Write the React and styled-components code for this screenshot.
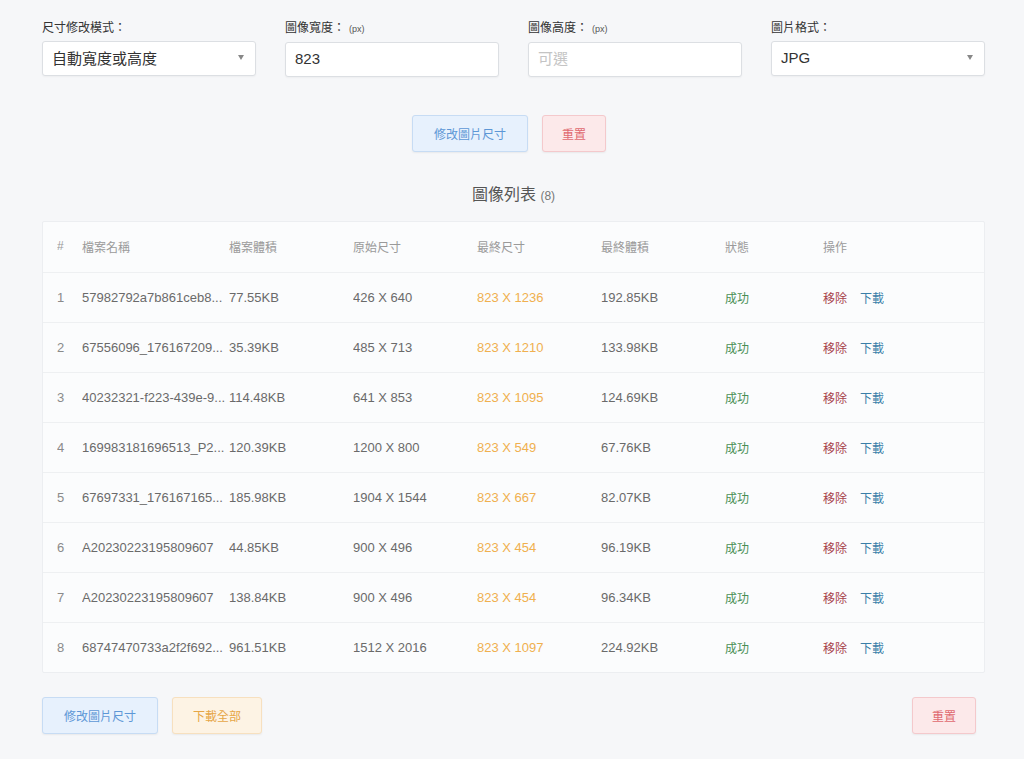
import React from 'react'
import styled, { createGlobalStyle, css } from 'styled-components'

const GlobalStyle = createGlobalStyle`
  html, body {
    margin: 0;
    padding: 0;
    background: #f6f7f9;
  }
  body {
    font-family: "Liberation Sans", "Noto Sans CJK TC", sans-serif;
    color: #555;
  }
`

const Page = styled.div`
  width: 943px;
  margin-left: 42px;
  padding-top: 20px;
  padding-bottom: 26px;
`

const Controls = styled.div`
  display: grid;
  grid-template-columns: repeat(4, 214px);
  column-gap: 29px;
`

const Field = styled.div`
  display: flex;
  flex-direction: column;
`

const Label = styled.label`
  font-size: 12px;
  line-height: 16px;
  color: #333;
  margin-bottom: 5px;

  small {
    font-size: 9px;
    color: #555;
    margin-left: 4px;
  }
`

const boxStyle = css`
  box-sizing: border-box;
  height: 35px;
  background: #fff;
  border: 1px solid #dcdfe3;
  border-radius: 3px;
  padding: 0 9px;
  font-family: inherit;
  font-size: 15px;
  color: #333;
  box-shadow: 0 1px 2px rgba(0, 0, 0, 0.04);
`

const Input = styled.input`
  ${boxStyle}
  width: 100%;
  outline: none;
  padding-bottom: 3px;

  &::placeholder {
    color: #c4c4c4;
  }
`

const Select = styled.div`
  ${boxStyle}
  display: flex;
  align-items: center;
  justify-content: space-between;
  padding-bottom: 3px;

  &::after {
    content: "";
    border-left: 3.5px solid transparent;
    border-right: 3.5px solid transparent;
    border-top: 5px solid #888;
    margin-right: 2px;
  }
`

const ButtonRow = styled.div`
  display: flex;
  justify-content: ${p => p.$spread ? 'flex-start' : 'center'};
  gap: 14px;
  margin-top: ${p => p.$top}px;
  padding-right: ${p => p.$spread ? 0 : 9}px;
`

const palette = {
  blue: { bg: '#e7f1fd', border: '#c7dcf4', color: '#5d97d6' },
  red: { bg: '#fce9ea', border: '#f4c9cc', color: '#e06a70' },
  orange: { bg: '#fdf3e4', border: '#f7e0bf', color: '#e6a647' }
}

const Button = styled.button`
  box-sizing: border-box;
  height: 37px;
  width: ${p => p.$w}px;
  padding: 0;
  border-radius: 3px;
  font-family: inherit;
  font-size: 12px;
  cursor: pointer;
  background: ${p => palette[p.$kind].bg};
  border: 1px solid ${p => palette[p.$kind].border};
  color: ${p => palette[p.$kind].color};
  box-shadow: 0 1px 2px rgba(0, 0, 0, 0.06);
  margin-left: ${p => p.$push ? 'auto' : '0'};
  margin-right: ${p => p.$push ? '9px' : '0'};
`

const Title = styled.h3`
  margin: 33px 0 0;
  text-align: center;
  font-weight: normal;
  font-size: 16px;
  line-height: 20px;
  color: #555;

  span {
    font-size: 12px;
    color: #777;
  }
`

const Table = styled.div`
  margin-top: 15px;
  background: #fbfcfd;
  border: 1px solid #eceef1;
  border-radius: 2px;
`

const Row = styled.div`
  display: grid;
  grid-template-columns: 25px 147px 124px 124px 124px 124px 98px 1fr;
  align-items: center;
  height: 50px;
  padding-left: 14px;
  padding-bottom: ${p => p.$head ? 2 : 0}px;
  font-size: ${p => p.$head ? 12 : 13}px;
  color: ${p => p.$head ? '#9a9a9a' : '#6a6a6a'};
  border-top: ${p => p.$head ? 'none' : '1px solid #eef0f2'};
  box-sizing: border-box;
`

const Cell = styled.span`
  white-space: nowrap;
  overflow: hidden;
  color: ${p => p.$color || 'inherit'};
`

const Index = styled(Cell)`
  color: #8a8a8a;
`

const Status = styled(Cell)`
  font-size: 12px;
  color: #4a8f55;
`

const Actions = styled.span`
  display: flex;
  gap: 13px;
  font-size: 12px;
`

const Action = styled.a`
  color: ${p => p.$color};
  text-decoration: none;
  cursor: pointer;
`

const rows = [
  ['57982792a7b861ceb8...', '77.55KB', '426 X 640', '823 X 1236', '192.85KB'],
  ['67556096_176167209...', '35.39KB', '485 X 713', '823 X 1210', '133.98KB'],
  ['40232321-f223-439e-9...', '114.48KB', '641 X 853', '823 X 1095', '124.69KB'],
  ['169983181696513_P2...', '120.39KB', '1200 X 800', '823 X 549', '67.76KB'],
  ['67697331_176167165...', '185.98KB', '1904 X 1544', '823 X 667', '82.07KB'],
  ['A20230223195809607', '44.85KB', '900 X 496', '823 X 454', '96.19KB'],
  ['A20230223195809607', '138.84KB', '900 X 496', '823 X 454', '96.34KB'],
  ['68747470733a2f2f692...', '961.51KB', '1512 X 2016', '823 X 1097', '224.92KB']
]

export default function App() {
  return (
    <Page>
      <GlobalStyle />
      <Controls>
        <Field>
          <Label>尺寸修改模式：</Label>
          <Select>自動寬度或高度</Select>
        </Field>
        <Field>
          <Label>圖像寬度：<small>(px)</small></Label>
          <Input defaultValue="823" />
        </Field>
        <Field>
          <Label>圖像高度：<small>(px)</small></Label>
          <Input placeholder="可選" />
        </Field>
        <Field>
          <Label>圖片格式：</Label>
          <Select>JPG</Select>
        </Field>
      </Controls>

      <ButtonRow $top={38}>
        <Button $kind="blue" $w={116}>修改圖片尺寸</Button>
        <Button $kind="red" $w={64}>重置</Button>
      </ButtonRow>

      <Title>圖像列表 <span>(8)</span></Title>

      <Table>
        <Row $head>
          <Cell>#</Cell>
          <Cell>檔案名稱</Cell>
          <Cell>檔案體積</Cell>
          <Cell>原始尺寸</Cell>
          <Cell>最終尺寸</Cell>
          <Cell>最終體積</Cell>
          <Cell>狀態</Cell>
          <Cell>操作</Cell>
        </Row>
        {rows.map((r, i) => (
          <Row key={i}>
            <Index>{i + 1}</Index>
            <Cell>{r[0]}</Cell>
            <Cell>{r[1]}</Cell>
            <Cell>{r[2]}</Cell>
            <Cell $color="#f0b04f">{r[3]}</Cell>
            <Cell>{r[4]}</Cell>
            <Status>成功</Status>
            <Actions>
              <Action $color="#a8424a">移除</Action>
              <Action $color="#3a7ea8">下載</Action>
            </Actions>
          </Row>
        ))}
      </Table>

      <ButtonRow $spread $top={24}>
        <Button $kind="blue" $w={116}>修改圖片尺寸</Button>
        <Button $kind="orange" $w={90}>下載全部</Button>
        <Button $kind="red" $w={64} $push>重置</Button>
      </ButtonRow>
    </Page>
  )
}
